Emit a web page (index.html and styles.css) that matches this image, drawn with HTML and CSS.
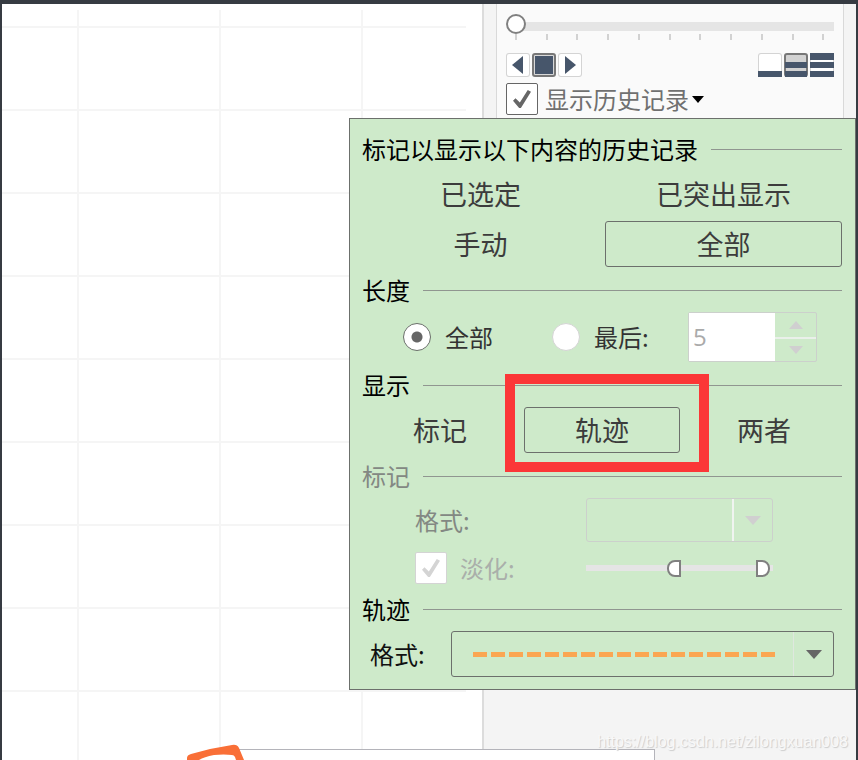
FILE: index.html
```html
<!DOCTYPE html>
<html lang="zh-CN">
<head>
<meta charset="utf-8">
<title>显示历史记录</title>
<link rel="stylesheet" href="styles.css">
</head>
<body>
<main class="workspace">
  <div class="canvas"><div class="gridlines"></div></div>
  <aside class="sidebar">
    <div class="card">
      <input class="timeline" type="range" min="0" max="10" value="0" aria-label="时间轴">
      <svg class="ticks" viewBox="0 0 328 6" preserveAspectRatio="none" aria-hidden="true">
        <path d="M10 0v6M41 0v6M71 0v6M102 0v6M133 0v6M164 0v6M194 0v6M225 0v6M256 0v6M287 0v6M317 0v6" stroke="#d2d2d2" stroke-width="2"/>
      </svg>
      <div class="toolbar">
        <div class="group">
          <button class="tool" aria-label="后退"><svg viewBox="0 0 24 24"><path d="M17 3v18L6 12z" fill="#47566b"/></svg></button>
          <button class="tool active" aria-label="停止"><svg viewBox="0 0 24 24"><rect x="1" y="1" width="22" height="22" rx="2" fill="#d8d8d8" stroke="#777" stroke-width="2"/><path d="M3 3h18v18H3z" fill="#47566b"/></svg></button>
          <button class="tool" aria-label="前进"><svg viewBox="0 0 24 24"><path d="M7 3v18l11-9z" fill="#47566b"/></svg></button>
        </div>
        <div class="group">
          <button class="tool" aria-label="慢速"><svg viewBox="0 0 24 24"><path d="M0 18h24v6H0z" fill="#47566b"/></svg></button>
          <button class="tool active" aria-label="中速"><svg viewBox="0 0 24 24"><rect x="1" y="1" width="22" height="22" rx="2" fill="#d2d2d2" stroke="#777" stroke-width="2"/><path d="M1 9h22v6H1zM1 18h22v6H1z" fill="#47566b"/></svg></button>
          <button class="tool" aria-label="快速"><svg viewBox="0 0 24 24"><path d="M0 0h24v7H0zM0 9h24v6H0zM0 18h24v6H0z" fill="#47566b"/></svg></button>
        </div>
      </div>
      <div class="history">
        <input class="check" type="checkbox" id="history" checked>
        <label for="history">显示历史记录</label>
        <svg class="caret" viewBox="0 0 12 7" aria-hidden="true"><path d="M0 0h12L6 7z" fill="#000"/></svg>
      </div>
    </div>
  </aside>

  <form class="popup">
    <section>
      <h2>标记以显示以下内容的历史记录</h2>
      <div class="choices two">
        <button type="button" class="choice">已选定</button>
        <button type="button" class="choice">已突出显示</button>
        <button type="button" class="choice">手动</button>
        <button type="button" class="choice selected">全部</button>
      </div>
    </section>
    <section>
      <h2>长度</h2>
      <div class="length">
        <div class="option"><input class="radio" type="radio" name="length" id="all" checked><label for="all">全部</label></div>
        <div class="option"><input class="radio" type="radio" name="length" id="last"><label for="last">最后:</label></div>
        <div class="stepper">
          <input type="text" value="5" aria-label="最后" disabled>
          <div class="steps">
            <button type="button" aria-label="增加" disabled><svg viewBox="0 0 14 8"><path d="M0 8h14L7 0z" fill="#d0cfd0"/></svg></button>
            <button type="button" aria-label="减少" disabled><svg viewBox="0 0 14 8"><path d="M0 0h14L7 8z" fill="#d0cfd0"/></svg></button>
          </div>
        </div>
      </div>
    </section>
    <section>
      <h2>显示</h2>
      <div class="choices three">
        <button type="button" class="choice">标记</button>
        <div class="marked">
          <button type="button" class="choice selected">轨迹</button>
          <span class="highlight"></span>
        </div>
        <button type="button" class="choice">两者</button>
      </div>
    </section>
    <section>
      <h2 class="muted">标记</h2>
      <div class="marks">
        <label class="muted" for="mark-format">格式:</label>
        <div class="dropdown off">
          <select id="mark-format" disabled></select>
          <span class="arrow"><svg viewBox="0 0 16 9"><path d="M0 0h16L8 9z" fill="#d0cfd0"/></svg></span>
        </div>
        <div class="option fade">
          <input class="check" type="checkbox" id="fade" checked disabled>
          <label for="fade">淡化:</label>
        </div>
        <div class="span">
          <input class="low" type="range" min="0" max="100" value="47" aria-label="淡化起点" disabled>
          <input class="high" type="range" min="0" max="100" value="98" aria-label="淡化终点" disabled>
        </div>
      </div>
    </section>
    <section>
      <h2>轨迹</h2>
      <div class="trace">
        <label for="trace-format">格式:</label>
        <div class="dropdown">
          <select id="trace-format"></select>
          <span class="dashes"></span>
          <span class="arrow"><svg viewBox="0 0 16 9"><path d="M0 0h16L8 9z" fill="#666"/></svg></span>
        </div>
      </div>
    </section>
  </form>

  <div class="window"></div>
  <svg class="logo" viewBox="0 0 60 16" aria-hidden="true">
    <path d="M3 16V14Q3 11 7 10L26 5L48 1Q53 0 55 4L60 16Z" fill="#f96f37"/>
    <path d="M15 16Q20 13 30 11Q40 10 48 11Q50 11 51 13L52 16Z" fill="#fff"/>
  </svg>
  <span class="watermark">https://blog.csdn.net/zilongxuan008</span>
</main>
</body>
</html>
```
FILE: styles.css
```css
* {
  box-sizing: border-box;
}

body {
  margin: 0;
  background: #363b42;
  font-family: "Noto Sans CJK SC", sans-serif;
  font-size: 24px;
  line-height: 28px;
  color: #333;
}

button,
input,
select {
  margin: 0;
  padding: 0;
  border: 0;
  background: none;
  font: inherit;
  color: inherit;
  appearance: none;
}

svg {
  display: block;
}

.workspace {
  position: relative;
  display: grid;
  grid-template-columns: 1fr 374px;
  min-height: 100vh;
  border: solid #363b42;
  border-width: 4px 2px 0;
  background: #f4f4f4;
  overflow: hidden;
}

.canvas {
  display: grid;
  padding: 6px 16px 0 0;
  background: #fff;
}

.gridlines {
  background:
    repeating-linear-gradient(to bottom, transparent 0 16px, #f5f5f5 16px 18px, transparent 18px 83px),
    repeating-linear-gradient(to right, transparent 0 75px, #f5f5f5 75px 77px, transparent 77px 142px);
}

.sidebar {
  display: grid;
  align-items: start;
  padding: 0 12px;
  border-left: 2px solid #dcdcdc;
}

.card {
  padding: 10px 9px 4px;
  border: solid #d9d9d9;
  border-width: 0 1px;
  background: #fafafa;
}

.timeline {
  display: block;
  width: 100%;
  height: 20px;
  background: linear-gradient(#e5e5e5, #e5e5e5) 10px 8px / 100% 9px no-repeat;
}

.timeline::-webkit-slider-thumb {
  appearance: none;
  width: 20px;
  height: 20px;
  border: 2px solid #808080;
  border-radius: 50%;
  background: #fff;
}

.ticks {
  width: 100%;
  height: 6px;
}

.toolbar {
  display: flex;
  justify-content: space-between;
  margin: 13px 0 6px;
}

.group {
  display: flex;
  gap: 2px;
}

.tool {
  width: 24px;
  height: 24px;
  border-radius: 3px;
  background: #fff;
  box-shadow: inset 0 0 0 1px #d4d4d4;
}

.tool.active {
  box-shadow: none;
}

.history {
  display: flex;
  align-items: center;
  color: #707070;
}

.history label {
  margin: 0 3px 0 7px;
}

.caret {
  width: 12px;
  height: 7px;
}

.check {
  flex: none;
  width: 32px;
  height: 32px;
  border: 1px solid #666;
  border-radius: 2px;
  background: #fff;
  display: grid;
  place-items: center;
}

.check::before {
  content: "";
  width: 18px;
  height: 18px;
  background: #666;
  clip-path: polygon(0 60%, 14% 46%, 38% 70%, 82% 0, 100% 10%, 44% 100%, 34% 100%);
}

.check:disabled {
  border-color: #d4d4d4;
}

.check:disabled::before {
  background: #d4d4d4;
}

.popup {
  position: absolute;
  top: 114px;
  right: 0;
  display: grid;
  gap: 9px;
  width: 507px;
  padding: 16px 13px 12px 12px;
  border: 1px solid #6c706c;
  background: #ceeaca;
}

section {
  display: grid;
  gap: 8px;
}

h2 {
  display: flex;
  align-items: center;
  gap: 13px;
  margin: 0;
  font-size: 24px;
  line-height: 28px;
  font-weight: 400;
  color: #000;
}

h2::after {
  content: "";
  flex: 1;
  height: 1px;
  background: #909690;
}

.muted {
  color: #838883;
}

.choices {
  display: grid;
  gap: 4px 6px;
}

.two {
  grid-template-columns: repeat(2, 1fr);
}

.three {
  grid-template-columns: repeat(3, 1fr);
}

.choice {
  width: 100%;
  height: 46px;
  border: 1px solid transparent;
  border-radius: 3px;
  font-size: 27px;
  color: #3c3c3c;
}

.selected {
  border-color: #6c706c;
}

.marked {
  position: relative;
}

.highlight {
  position: absolute;
  inset: -33px -29px -19px -19px;
  border: 10px solid #fb3737;
  pointer-events: none;
}

.length {
  display: grid;
  grid-template-columns: 149px 136px 129px;
  align-items: center;
  padding-left: 41px;
}

.option {
  display: flex;
  align-items: center;
  gap: 14px;
}

.radio {
  width: 28px;
  height: 28px;
  border: 1px solid #d4d4d4;
  border-radius: 50%;
  background: #fff;
}

.radio:checked {
  border-color: #6c706c;
  background: radial-gradient(circle, #666 5px, #fff 6px);
}

.stepper {
  display: grid;
  grid-template-columns: 1fr 41px;
  height: 50px;
  border: 1px solid #ccd0cc;
  border-radius: 2px;
}

.stepper input {
  width: 100%;
  padding-left: 4px;
  background: #fff;
  font-family: "Open Sans", sans-serif;
  color: #aaa;
}

.steps {
  display: grid;
  grid-template-rows: 1fr 1fr;
}

.steps button {
  display: grid;
  place-items: center;
}

.steps button + button {
  border-top: 2px solid #eaf0ea;
}

.steps svg {
  width: 14px;
  height: 8px;
}

.marks {
  display: grid;
  grid-template-columns: 171px 187px;
  grid-template-rows: 44px 34px;
  align-items: center;
  row-gap: 9px;
  padding: 0 0 1px 53px;
}

.fade {
  gap: 13px;
  color: #aaafaa;
}

.dropdown {
  display: grid;
  grid-template-columns: 1fr 40px;
  height: 46px;
  border: 1px solid #6c706c;
  border-radius: 3px;
}

.dropdown select {
  grid-area: 1 / 1 / 2 / 3;
  width: 100%;
}

.arrow {
  grid-area: 1 / 2;
  display: grid;
  place-items: center;
  border-left: 1px solid #dfe8df;
  pointer-events: none;
}

.arrow svg {
  width: 16px;
  height: 9px;
}

.off {
  height: 44px;
  border-color: #ccd0cc;
}

.off .arrow {
  border-left: 2px solid #f0f4f0;
}

.dashes {
  grid-area: 1 / 1;
  align-self: center;
  height: 5px;
  margin: 0 18px 0 21px;
  background: repeating-linear-gradient(to right, #fba652 0 14px, transparent 14px 18px);
  pointer-events: none;
}

.span {
  display: grid;
  height: 18px;
  background: linear-gradient(#e5e5e5, #e5e5e5) center / 100% 6px no-repeat;
}

.span input {
  grid-area: 1 / 1;
  width: 100%;
  height: 18px;
}

.span input::-webkit-slider-thumb {
  appearance: none;
  width: 14px;
  height: 17px;
  border: 2px solid #808080;
  background: #fff;
}

.low::-webkit-slider-thumb {
  border-radius: 8px 0 0 8px;
}

.high::-webkit-slider-thumb {
  border-radius: 0 8px 8px 0;
}

.trace {
  display: grid;
  grid-template-columns: 81px 1fr;
  align-items: center;
  padding: 0 8px;
  color: #111;
}

.window {
  position: absolute;
  bottom: 0;
  left: 208px;
  right: 201px;
  height: 11px;
  border: solid #b4b4ba;
  border-width: 1px 1px 0 0;
  background: #fff;
}

.logo {
  position: absolute;
  bottom: 0;
  left: 182px;
  width: 60px;
  height: 16px;
}

.watermark {
  position: absolute;
  right: 8px;
  bottom: 8px;
  font-family: "Liberation Sans", sans-serif;
  font-size: 16px;
  line-height: 20px;
  color: #f8f8f8;
  text-shadow: 1px 1px 1px #ccc;
}
```
